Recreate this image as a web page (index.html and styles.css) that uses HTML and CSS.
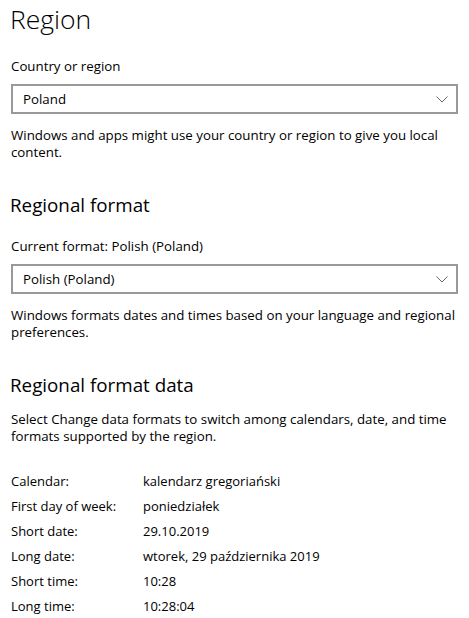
FILE: index.html
```html
<!DOCTYPE html>
<html lang="en">
<head>
<meta charset="utf-8">
<link rel="stylesheet" href="styles.css">
</head>
<body>
<main class="page">
  <h1 class="title">Region</h1>

  <section class="group">
    <div class="label label-first">Country or region</div>
    <div class="select">
      <span class="select-value">Poland</span>
      <svg class="chevron" width="12" height="7" viewBox="0 0 12 7"><path d="M0.5 0.5 L6 6 L11.5 0.5" fill="none" stroke="#666" stroke-width="1"/></svg>
    </div>
    <p class="desc">Windows and apps might use your country or region to give you local content.</p>
  </section>

  <section class="group">
    <h2 class="subtitle">Regional format</h2>
    <div class="label">Current format: Polish (Poland)</div>
    <div class="select">
      <span class="select-value">Polish (Poland)</span>
      <svg class="chevron" width="12" height="7" viewBox="0 0 12 7"><path d="M0.5 0.5 L6 6 L11.5 0.5" fill="none" stroke="#666" stroke-width="1"/></svg>
    </div>
    <p class="desc">Windows formats dates and times based on your language and regional preferences.</p>
  </section>

  <section class="group">
    <h2 class="subtitle">Regional format data</h2>
    <p class="desc desc-data">Select Change data formats to switch among calendars, date, and time formats supported by the region.</p>
    <dl class="data">
      <dt>Calendar:</dt><dd>kalendarz gregoriański</dd>
      <dt>First day of week:</dt><dd>poniedziałek</dd>
      <dt>Short date:</dt><dd>29.10.2019</dd>
      <dt>Long date:</dt><dd>wtorek, 29 października 2019</dd>
      <dt>Short time:</dt><dd>10:28</dd>
      <dt>Long time:</dt><dd>10:28:04</dd>
    </dl>
  </section>
</main>
</body>
</html>
```

FILE: styles.css
```css
html, body {
  margin: 0;
  padding: 0;
  background: #fff;
}
body {
  font-family: "Open Sans", "Noto Sans", sans-serif;
  color: #000;
  font-size: 13.3px;
  line-height: 17px;
}
.page {
  padding: 2px 11px 0 11px;
  width: 447px;
}
.title {
  margin: 0 0 0 -1px;
  font-size: 26.5px;
  font-weight: 300;
  line-height: 34px;
}
.group {
  margin: 0;
}
.label {
  margin-top: 20px;
}
.label-first {
  margin-top: 22px;
}
.select {
  margin-top: 9px;
  height: 26px;
  border: 2px solid #999;
  display: flex;
  align-items: center;
  justify-content: space-between;
  padding: 0 8px 0 10px;
}
.chevron {
  display: block;
}
.desc {
  margin: 13px 0 0 0;
}
.subtitle {
  margin: 31px 0 0 -1px;
  font-size: 18.8px;
  font-weight: 400;
  line-height: 26px;
}
.desc-data {
  margin-top: 13px;
}
.data {
  margin: 24px 0 0 0;
  display: grid;
  grid-template-columns: 132px 1fr;
  grid-auto-rows: 25px;
  align-items: center;
  font-size: 13px;
}
.data dt, .data dd {
  margin: 0;
}
```
